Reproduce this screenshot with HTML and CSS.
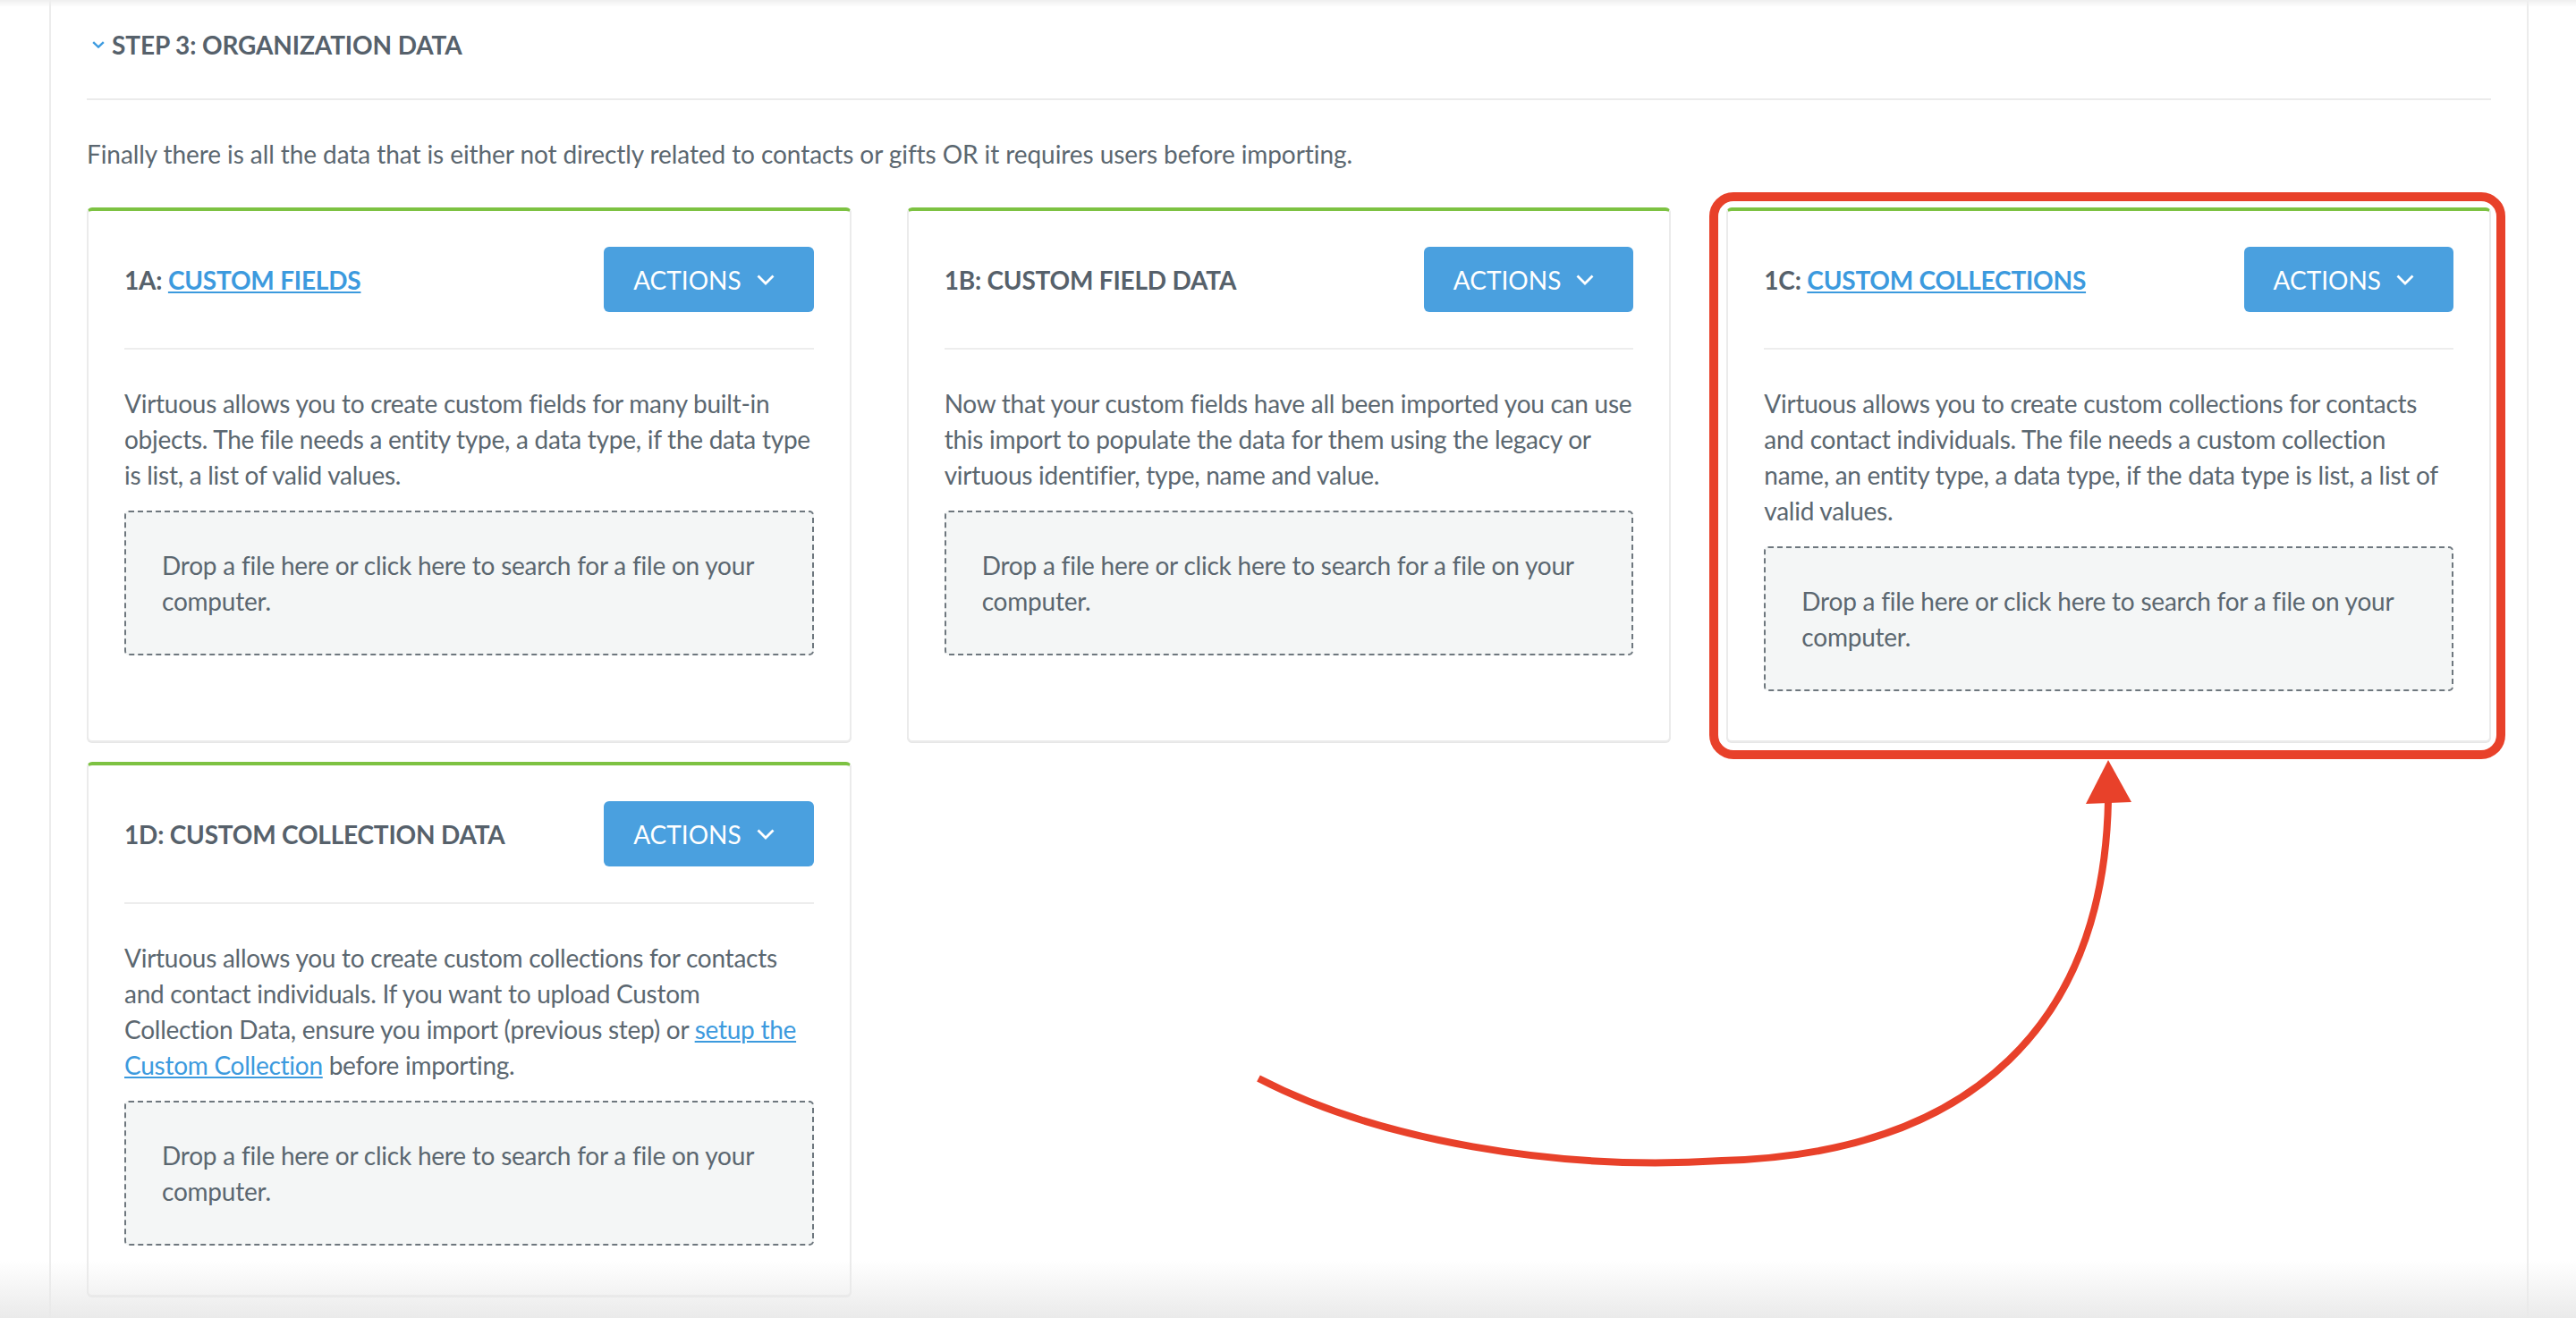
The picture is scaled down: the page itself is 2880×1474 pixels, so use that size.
FILE: index.html
```html
<!DOCTYPE html>
<html lang="en">
<head>
    <meta charset="UTF-8">
    <title>Import | Step 3: Organization Data</title>
    <link rel="stylesheet" href="styles.css">
</head>
<body>
    <div class="top-shade"></div>

    <div class="step-panel">
        <div class="step-header">
            <svg class="step-chevron" width="14" height="8" viewBox="0 0 14 8">
                <polyline points="1.2,1.2 7,6.6 12.8,1.2" />
            </svg>
            <h2 class="step-title">STEP 3: ORGANIZATION DATA</h2>
        </div>

        <p class="step-intro">Finally there is all the data that is either not directly related to contacts or gifts OR it requires users before importing.</p>

        <div class="import-grid">
            <!-- 1A -->
            <div class="import-card">
                <div class="card-header">
                    <h3 class="card-title">1A: <a href="#">CUSTOM FIELDS</a></h3>
                    <button class="actions-btn" type="button">ACTIONS
                        <svg class="btn-chevron" width="20" height="12" viewBox="0 0 20 12"><polyline points="1.5,1.5 10,10 18.5,1.5" /></svg>
                    </button>
                </div>
                <p class="card-text">Virtuous allows you to create custom fields for many built-in objects. The file needs a entity type, a data type, if the data type is list, a list of valid values.</p>
                <div class="dropzone">Drop a file here or click here to search for a file on your computer.</div>
            </div>

            <!-- 1B -->
            <div class="import-card">
                <div class="card-header">
                    <h3 class="card-title">1B: CUSTOM FIELD DATA</h3>
                    <button class="actions-btn" type="button">ACTIONS
                        <svg class="btn-chevron" width="20" height="12" viewBox="0 0 20 12"><polyline points="1.5,1.5 10,10 18.5,1.5" /></svg>
                    </button>
                </div>
                <p class="card-text">Now that your custom fields have all been imported you can use this import to populate the data for them using the legacy or virtuous identifier, type, name and value.</p>
                <div class="dropzone">Drop a file here or click here to search for a file on your computer.</div>
            </div>

            <!-- 1C -->
            <div class="import-card">
                <div class="card-header">
                    <h3 class="card-title">1C: <a href="#">CUSTOM COLLECTIONS</a></h3>
                    <button class="actions-btn" type="button">ACTIONS
                        <svg class="btn-chevron" width="20" height="12" viewBox="0 0 20 12"><polyline points="1.5,1.5 10,10 18.5,1.5" /></svg>
                    </button>
                </div>
                <p class="card-text">Virtuous allows you to create custom collections for contacts and contact individuals. The file needs a custom collection name, an entity type, a data type, if the data type is list, a list of valid values.</p>
                <div class="dropzone">Drop a file here or click here to search for a file on your computer.</div>
            </div>

            <!-- 1D -->
            <div class="import-card">
                <div class="card-header">
                    <h3 class="card-title">1D: CUSTOM COLLECTION DATA</h3>
                    <button class="actions-btn" type="button">ACTIONS
                        <svg class="btn-chevron" width="20" height="12" viewBox="0 0 20 12"><polyline points="1.5,1.5 10,10 18.5,1.5" /></svg>
                    </button>
                </div>
                <p class="card-text">Virtuous allows you to create custom collections for contacts and contact individuals. If you want to upload Custom Collection Data, ensure you import (previous step) or <a href="#">setup the Custom Collection</a> before importing.</p>
                <div class="dropzone">Drop a file here or click here to search for a file on your computer.</div>
            </div>
        </div>
    </div>

    <!-- annotation drawn over the page -->
    <svg class="annotation" width="2880" height="1474" viewBox="0 0 2880 1474">
        <rect x="1916" y="220" width="880" height="624" rx="22" ry="22" fill="none" stroke="#e8412a" stroke-width="10" />
        <path d="M1407 1206 C1540 1275 1740 1310 1925 1298 C2210 1290 2352 1140 2357 896" fill="none" stroke="#e8412a" stroke-width="8" />
        <polygon points="2357,850 2332,899 2383,897" fill="#e8412a" />
    </svg>

    <div class="bottom-shade"></div>
</body>
</html>
```

FILE: styles.css
```css
html, body {
    margin: 0;
    padding: 0;
    overflow: hidden;
}

body {
    font-family: Lato, "Open Sans", Arial, sans-serif;
    background-color: #ffffff;
    color: #5b6770;
    letter-spacing: -0.12px;
    width: 2880px;
    height: 1474px;
    position: relative;
}

.top-shade {
    position: absolute;
    top: 0;
    left: 0;
    right: 0;
    height: 8px;
    background: linear-gradient(#efefef, rgba(255, 255, 255, 0));
}

.step-panel {
    margin-left: 55px;
    width: 2772px;
    min-height: 1474px;
    box-sizing: border-box;
    border-left: 2px solid #ececec;
    border-right: 2px solid #ececec;
    padding: 0 40px;
}

.step-header {
    display: flex;
    align-items: center;
    gap: 8px;
    padding: 30px 0 40px 6px;
    border-bottom: 2px solid #ebebeb;
}

.step-chevron polyline {
    fill: none;
    stroke: #3d9be0;
    stroke-width: 2.4;
}

.step-title {
    margin: 0;
    font-size: 28px;
    line-height: 40px;
    font-weight: bold;
    color: #56616b;
}

.step-intro {
    margin: 40px 0;
    font-size: 28px;
    line-height: 40px;
    letter-spacing: -0.08px;
}

.import-grid {
    display: grid;
    grid-template-columns: repeat(3, 1fr);
    column-gap: 62px;
    row-gap: 22px;
}

.import-card {
    background-color: #ffffff;
    border: 2px solid #ebebeb;
    border-top: 4px solid #7dc242;
    border-radius: 6px;
    padding: 40px 40px 55px;
    box-shadow: 0 1px 0 #e6e6e6;
}

.card-header {
    display: flex;
    justify-content: space-between;
    align-items: center;
    padding-bottom: 40px;
    border-bottom: 2px solid #ededed;
}

.card-title {
    margin: 0;
    font-size: 28px;
    line-height: 40px;
    font-weight: bold;
    color: #56616b;
    letter-spacing: -0.2px;
}

a {
    color: #3c9ade;
    text-decoration: underline;
    text-decoration-thickness: 2px;
    text-underline-offset: 2px;
}

.actions-btn {
    display: flex;
    align-items: center;
    gap: 17px;
    height: 73px;
    padding: 0 44px 0 33px;
    border: none;
    border-radius: 6px;
    background-color: #4aa0df;
    color: #ffffff;
    font-family: Lato, "Open Sans", Arial, sans-serif;
    font-size: 28px;
    letter-spacing: 0;
    cursor: pointer;
}

.btn-chevron polyline {
    fill: none;
    stroke: #ffffff;
    stroke-width: 2.8;
}

.card-text {
    margin: 40px 0 20px;
    font-size: 28px;
    line-height: 40px;
    letter-spacing: -0.26px;
}

.dropzone {
    background-color: #f4f6f6;
    border: 2px dashed #6e777e;
    border-radius: 5px;
    padding: 39px 40px;
    font-size: 28px;
    line-height: 40px;
    color: #5b6770;
    letter-spacing: -0.22px;
    cursor: pointer;
}

.annotation {
    position: absolute;
    top: 0;
    left: 0;
    pointer-events: none;
}

.bottom-shade {
    position: absolute;
    left: 0;
    right: 0;
    bottom: 0;
    height: 64px;
    background: linear-gradient(rgba(236, 236, 236, 0), rgba(233, 233, 233, 0.95));
    pointer-events: none;
}
```
